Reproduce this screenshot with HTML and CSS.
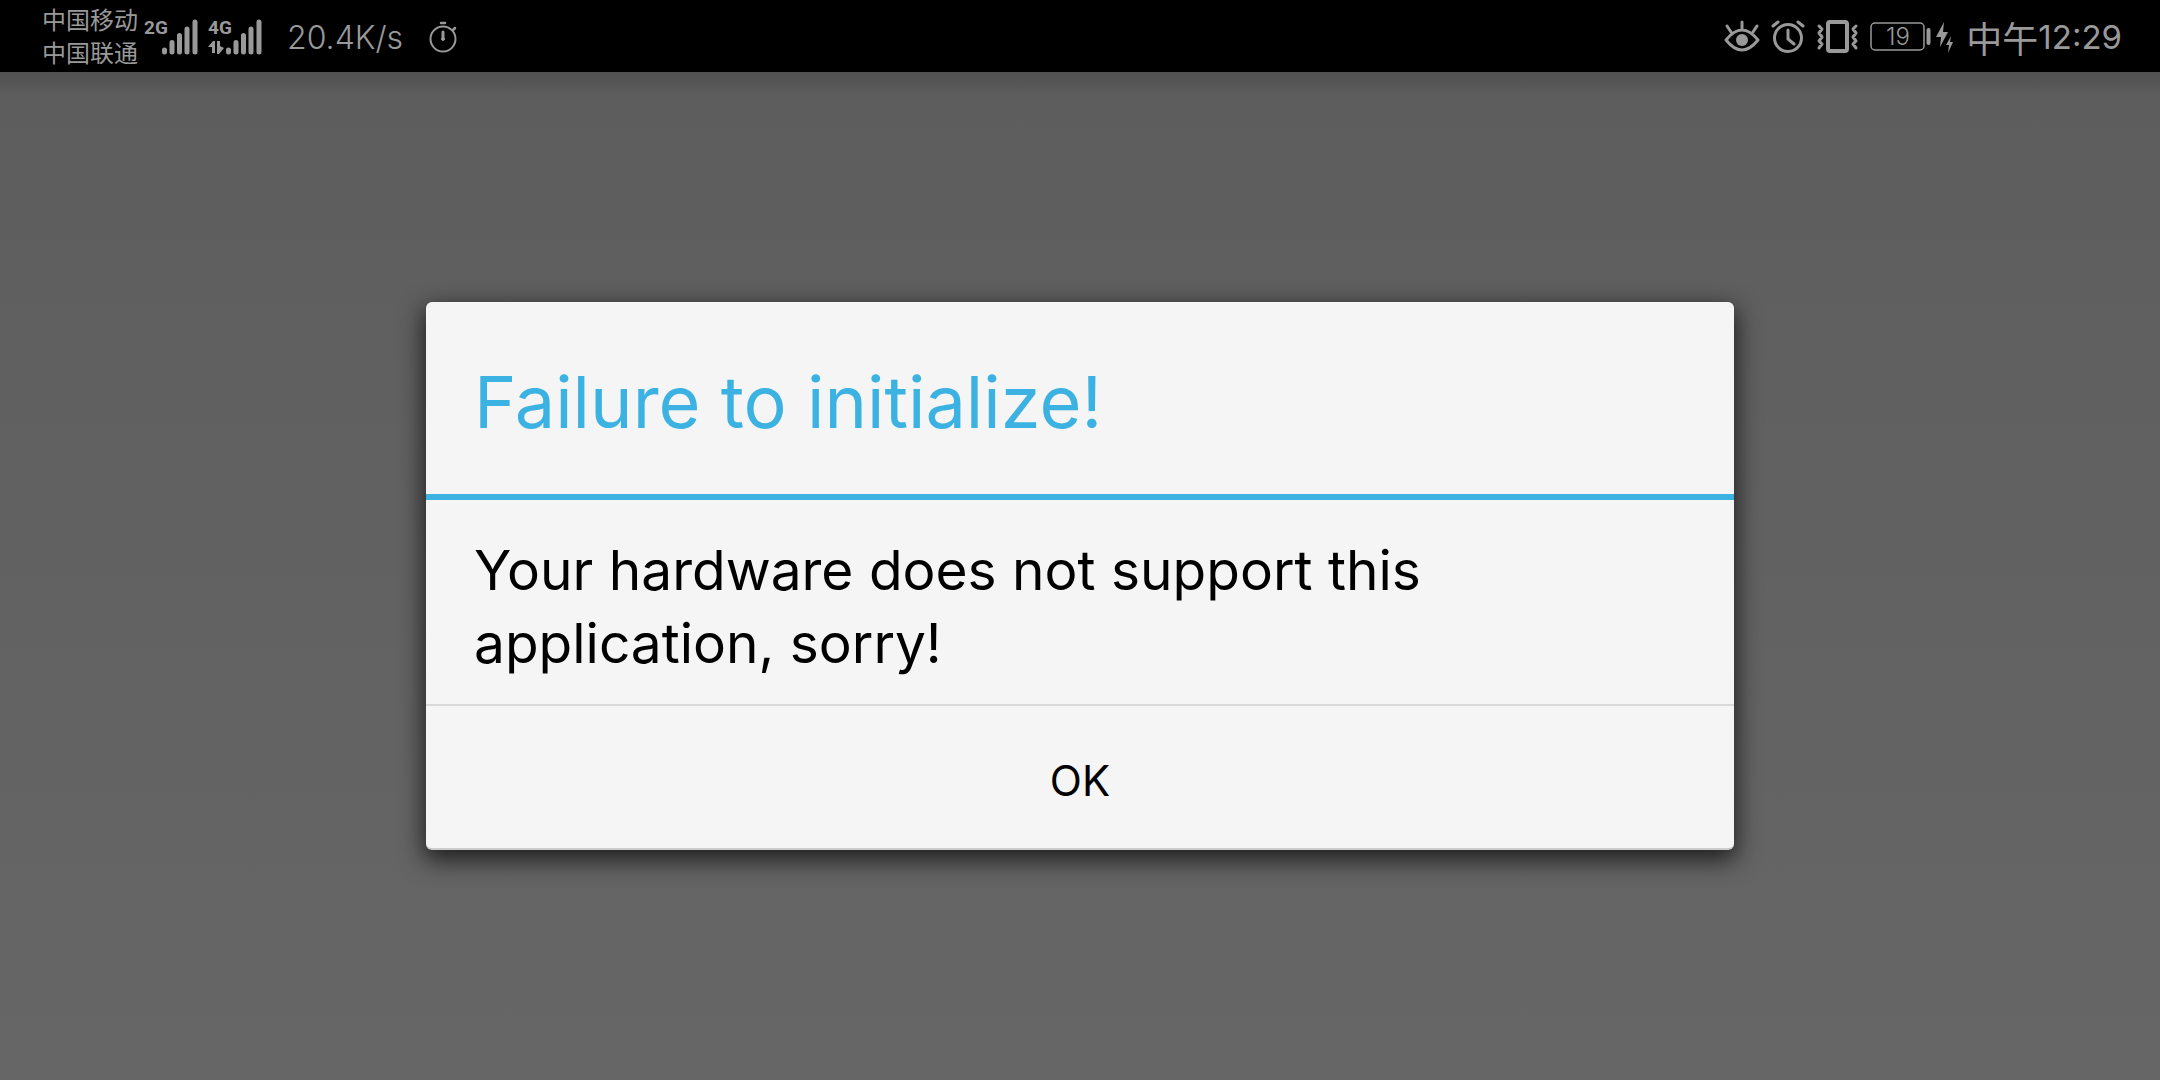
FILE: index.html
```html
<!DOCTYPE html>
<html lang="en">
<head>
<meta charset="utf-8">
<title>Failure to initialize!</title>
<link rel="stylesheet" href="styles.css">
</head>
<body>
<header class="status">
  <div class="status-left">
    <div class="carriers" lang="zh-CN"><span>中国移动</span><span>中国联通</span></div>
    <svg class="signal" width="56" height="40" viewBox="0 0 56 40" role="img" aria-label="2G signal">
      <text class="net" x="0" y="17">2G</text>
      <path class="bars" d="M20.500 33v2M28 25.500v9.500M35.500 18.500v16.500M43 12v23M51 5v30"/>
    </svg>
    <svg class="signal" width="56" height="40" viewBox="0 0 56 40" role="img" aria-label="4G signal">
      <text class="net" x="0" y="17">4G</text>
      <path class="fill" d="M0 30L5 24H7V36H4V30ZM9 24h3v5l4 2-5 6H9Z"/>
      <path class="bars" d="M20.500 33v2M28 25.500v9.500M35.500 18.500v16.500M43 12v23M51 5v30"/>
    </svg>
    <span class="speed">20.4K/s</span>
    <svg class="timer" width="32" height="36" viewBox="0 0 32 36" fill="none" role="img" aria-label="Timer">
      <circle cx="16" cy="20" r="12.500" stroke-width="2"/>
      <path d="M14 4h4M26 11l2-2" stroke-width="2.500"/>
      <path d="M16 13v7" stroke-width="3"/>
      <circle cx="16" cy="20" r="1.500"/>
    </svg>
  </div>
  <div class="status-right">
    <svg width="36" height="36" viewBox="0 0 36 36" fill="none" role="img" aria-label="Eye comfort">
      <path stroke-width="3" d="M2 21Q18 1 34 21Q18 41 2 21ZM18 3v6M3 7l4 6M33 7l-4 6"/>
      <circle class="fill" cx="18" cy="21" r="6"/>
    </svg>
    <svg width="36" height="36" viewBox="0 0 36 36" fill="none" role="img" aria-label="Alarm">
      <circle cx="18" cy="19" r="13.500" stroke-width="3"/>
      <path stroke-width="3" d="M18 11v9l6 5M3 7l5-4M33 7l-5-4"/>
    </svg>
    <svg width="44" height="36" viewBox="0 0 44 36" fill="none" role="img" aria-label="Vibrate">
      <rect x="12" y="3" width="19" height="29" rx="2" stroke-width="4"/>
      <path stroke-width="3" d="M3 7l3 3-3 4 3 4-3 4 3 3-3 4M40 7l-3 3 3 4-3 4 3 4-3 3 3 4"/>
    </svg>
    <svg class="battery" width="84" height="36" viewBox="0 0 84 36" fill="none" role="img" aria-label="Battery 19 percent, charging">
      <rect x="1" y="4" width="53" height="27" rx="4" stroke-width="1.500"/>
      <text class="level" x="28" y="26" text-anchor="middle">19</text>
      <path stroke-width="4" d="M58.500 11v13"/>
      <path class="fill" d="M74 3L66 18h5l-1 10 8-15h-5ZM81 17l-5 9h3l-1 8 5-11h-3Z"/>
    </svg>
    <time class="clock" lang="zh-CN"><span class="noon">中午</span>12:29</time>
  </div>
</header>
<main class="backdrop">
  <section class="dialog" role="alertdialog" aria-labelledby="title" aria-describedby="message">
    <h1 class="title" id="title">Failure to initialize!</h1>
    <p class="message" id="message">Your hardware does not support this application, sorry!</p>
    <button class="ok" type="button">OK</button>
  </section>
</main>
</body>
</html>
```
FILE: styles.css
```css
* { box-sizing: border-box; }
body {
  margin: 0;
  min-height: 100vh;
  display: flex;
  flex-direction: column;
  font-family: Inter, "Noto Sans CJK SC", sans-serif;
  background: #636363;
}
.status {
  height: 72px;
  padding: 2px 38px 0 42px;
  display: flex;
  align-items: center;
  justify-content: space-between;
  background: #000;
  color: #999;
}
.status-left, .status-right { display: flex; align-items: center; }
.status svg { stroke: #999; stroke-linecap: round; stroke-linejoin: round; flex: none; }
.status .fill { fill: #999; stroke: none; }
.carriers {
  display: flex;
  flex-direction: column;
  margin-top: -4px;
  font: 400 24px/33px "Noto Sans CJK SC", sans-serif;
}
.signal { margin-left: 6px; }
.signal + .signal { margin-left: 8px; }
.net { font: bold 19px "Liberation Sans Narrow", Roboto, sans-serif; fill: #999; stroke: none; }
.bars { stroke-width: 5; }
.speed { margin-left: 23px; padding-top: 2px; font-size: 32px; font-weight: 300; line-height: 40px; }
.timer { margin-left: 24px; }
.status-right { gap: 10px; }
.level { font: 300 24px Inter, sans-serif; fill: #999; stroke: none; }
.clock { display: flex; align-items: center; font-size: 33px; font-weight: 400; line-height: 40px; }
.battery { margin-right: 2px; }
.noon { font-family: "Noto Sans CJK SC", sans-serif; font-size: 36px; }
.backdrop {
  flex: 1;
  display: flex;
  align-items: center;
  justify-content: center;
  background: linear-gradient(#505050, #5d5d5d 24px, #606060 30%, #666);
}
.dialog {
  width: 61%;
  max-width: 1308px;
  background: #f5f5f5;
  border-radius: 6px;
  border-bottom: 2px solid #ccc;
  box-shadow: 0 8px 24px 2px rgba(0, 0, 0, .7);
}
.title {
  margin: 0;
  padding: 60px 48px 52px;
  border-bottom: 6px solid #3cb2e2;
  color: #3cb2e2;
  font-size: 72px;
  font-weight: 400;
  line-height: 80px;
}
.message {
  margin: 0;
  padding: 34px 48px 24px;
  border-bottom: 2px solid #d9d9d9;
  color: #000;
  font-size: 55px;
  line-height: 73px;
}
.ok {
  display: block;
  width: 100%;
  height: 142px;
  padding: 8px 0 0;
  border: 0;
  background: none;
  color: #000;
  font: 400 42px/56px Inter, sans-serif;
}
```
